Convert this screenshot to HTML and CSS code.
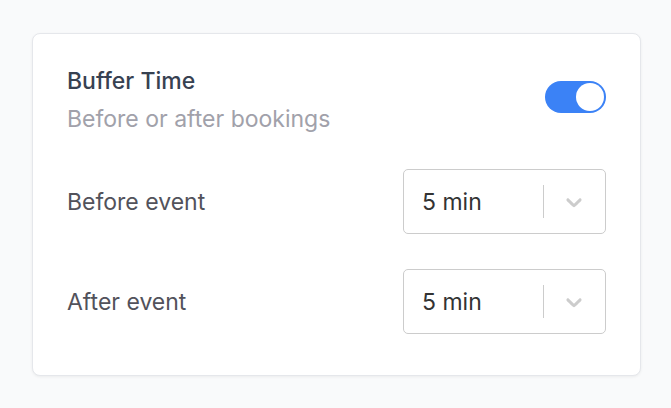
FILE: index.html
```html
<!DOCTYPE html>
<html lang="en">
<head>
<meta charset="utf-8">
<title>Buffer Time</title>
<link rel="stylesheet" href="styles.css">
</head>
<body>
<div class="card">
  <div class="header">
    <div class="heading">
      <div class="title">Buffer Time</div>
      <div class="subtitle">Before or after bookings</div>
    </div>
    <div class="toggle" role="switch" aria-checked="true"><span class="knob"></span></div>
  </div>
  <div class="row">
    <div class="label">Before event</div>
    <div class="select">
      <div class="value">5 min</div>
      <span class="sep"></span>
      <span class="indicator">
        <svg viewBox="0 0 20 20" width="26" height="26" aria-hidden="true"><path d="M4.516 7.548c0.436-0.446 1.043-0.481 1.576 0l3.908 3.747 3.908-3.747c0.533-0.481 1.141-0.446 1.574 0 0.436 0.445 0.408 1.197 0 1.615-0.406 0.418-4.695 4.502-4.695 4.502-0.217 0.223-0.502 0.335-0.787 0.335s-0.57-0.112-0.789-0.335c0 0-4.287-4.084-4.695-4.502s-0.436-1.17 0-1.615z"/></svg>
      </span>
    </div>
  </div>
  <div class="row">
    <div class="label">After event</div>
    <div class="select">
      <div class="value">5 min</div>
      <span class="sep"></span>
      <span class="indicator">
        <svg viewBox="0 0 20 20" width="26" height="26" aria-hidden="true"><path d="M4.516 7.548c0.436-0.446 1.043-0.481 1.576 0l3.908 3.747 3.908-3.747c0.533-0.481 1.141-0.446 1.574 0 0.436 0.445 0.408 1.197 0 1.615-0.406 0.418-4.695 4.502-4.695 4.502-0.217 0.223-0.502 0.335-0.787 0.335s-0.57-0.112-0.789-0.335c0 0-4.287-4.084-4.695-4.502s-0.436-1.17 0-1.615z"/></svg>
      </span>
    </div>
  </div>
</div>
</body>
</html>
```
FILE: styles.css
```css
html, body {
  margin: 0;
  padding: 0;
}
body {
  background: #f9fafb;
  font-family: Inter, "Noto Sans", sans-serif;
  padding: 33px 30px 0 32px;
  height: 408px;
  box-sizing: border-box;
}
.card {
  background: #ffffff;
  border: 1px solid #e5e7eb;
  border-radius: 8px;
  box-shadow: 0 1px 3px rgba(0, 0, 0, 0.06);
  padding: 33px 34px 41px 34px;
  display: flex;
  flex-direction: column;
  gap: 35px;
}
.header {
  display: flex;
  justify-content: space-between;
  align-items: flex-start;
  margin-bottom: 1px;
}
.title {
  font-size: 23px;
  line-height: 28px;
  font-weight: 500;
  color: #374151;
}
.subtitle {
  margin-top: 10px;
  font-size: 23px;
  line-height: 28px;
  color: #a1a1aa;
}
.toggle {
  margin-top: 14px;
  width: 61px;
  height: 32px;
  border-radius: 16px;
  background: #3b82f6;
  box-sizing: border-box;
  padding: 2px;
  display: flex;
  justify-content: flex-end;
}
.knob {
  width: 28px;
  height: 28px;
  border-radius: 50%;
  background: #ffffff;
}
.row {
  display: flex;
  justify-content: space-between;
  align-items: center;
}
.label {
  font-size: 23px;
  color: #52525b;
}
.select {
  width: 203px;
  height: 65px;
  box-sizing: border-box;
  border: 1px solid #cccccc;
  border-radius: 5px;
  display: flex;
  align-items: center;
  padding-left: 18px;
}
.value {
  flex: 1;
  font-size: 23px;
  color: #333333;
}
.sep {
  width: 1px;
  height: 33px;
  background: #cccccc;
}
.indicator {
  display: flex;
  padding: 0 18px 0 17px;
  fill: #cccccc;
}
```
